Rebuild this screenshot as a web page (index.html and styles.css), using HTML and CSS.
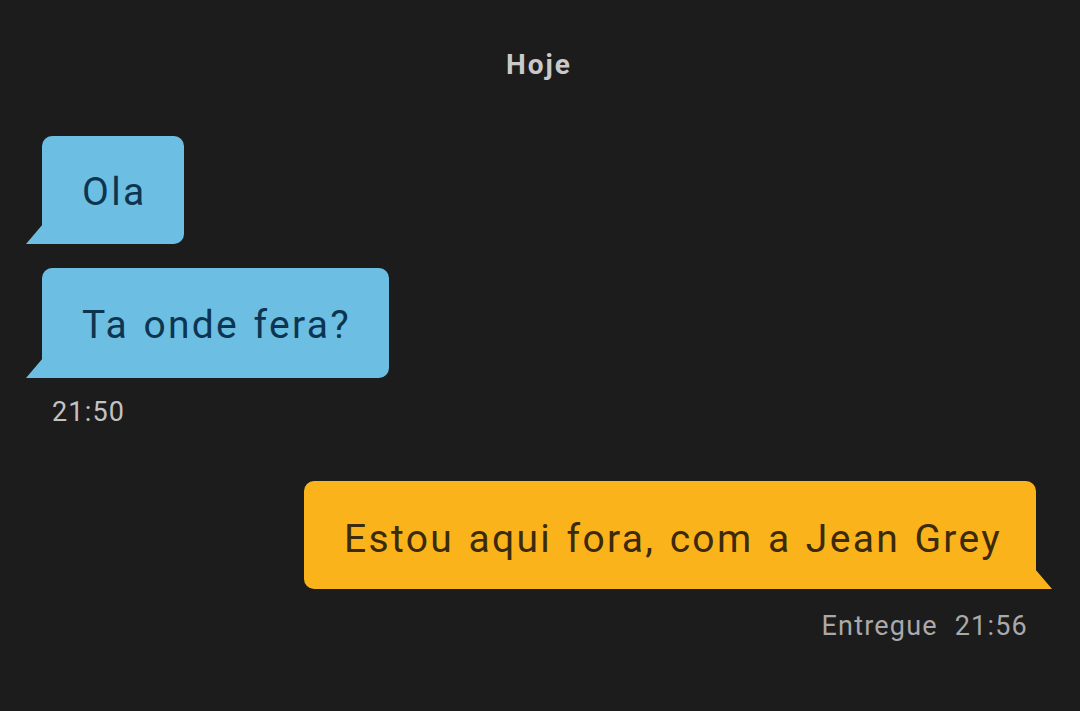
FILE: index.html
```html
<!DOCTYPE html>
<html lang="pt">
<head>
<meta charset="utf-8">
<link rel="stylesheet" href="styles.css">
</head>
<body>
<main class="chat">
  <div class="day">Hoje</div>
  <div class="group in">
    <div class="bubble blue first">Ola</div>
    <div class="bubble blue tail-left">Ta onde fera?</div>
    <div class="meta meta-in">21:50</div>
  </div>
  <div class="group out">
    <div class="bubble yellow tail-right">Estou aqui fora, com a Jean Grey</div>
    <div class="meta meta-out"><span>Entregue</span><span>21:56</span></div>
  </div>
</main>
</body>
</html>
```

FILE: styles.css
```css
html, body {
  margin: 0;
  padding: 0;
  background: #1c1c1d;
  width: 1080px;
  height: 711px;
  overflow: hidden;
}
.chat {
  font-family: Roboto, "Liberation Sans", sans-serif;
  display: flex;
  flex-direction: column;
  padding: 48px 44px 0 42px;
}
.day {
  align-self: center;
  color: #c9c9c9;
  font-weight: 700;
  font-size: 28px;
  letter-spacing: 2px;
  line-height: 34px;
  height: 34px;
}
.group {
  display: flex;
  flex-direction: column;
}
.group.in {
  align-items: flex-start;
  margin-top: 54px;
}
.group.out {
  align-items: flex-end;
  margin-top: 54px;
}
.bubble {
  position: relative;
  font-size: 39px;
  letter-spacing: 2.3px;
  word-spacing: 2.5px;
  line-height: 112px;
  height: 108px;
  padding: 0 38px 0 40px;
  border-radius: 10px;
  box-sizing: border-box;
  white-space: nowrap;
}
.blue {
  background: #6cbfe3;
  color: #0e3550;
  border-bottom-left-radius: 0;
}
.first {
  margin-bottom: 24px;
}
.tail-left {
  height: 110px;
  line-height: 114px;
}
.blue::before {
  content: "";
  position: absolute;
  left: -16px;
  bottom: 0;
  width: 17px;
  height: 20px;
  background: #6cbfe3;
  clip-path: polygon(100% 0, 100% 100%, 0 100%);
}
.yellow {
  background: #fbb31b;
  color: #3b2a0c;
  border-bottom-right-radius: 0;
  padding: 0 34px 0 40px;
  line-height: 116px;
}
.yellow::after {
  content: "";
  position: absolute;
  right: -16px;
  bottom: 0;
  width: 17px;
  height: 20px;
  background: #fbb31b;
  clip-path: polygon(0 0, 100% 100%, 0 100%);
}
.meta {
  font-size: 27px;
  letter-spacing: 1.2px;
  line-height: 30px;
}
.meta-in {
  color: #c2c2c2;
  margin: 19px 0 0 10px;
}
.meta-out {
  color: #a9a9a9;
  margin: 22px 8px 0 0;
  display: flex;
  gap: 17px;
}
```
